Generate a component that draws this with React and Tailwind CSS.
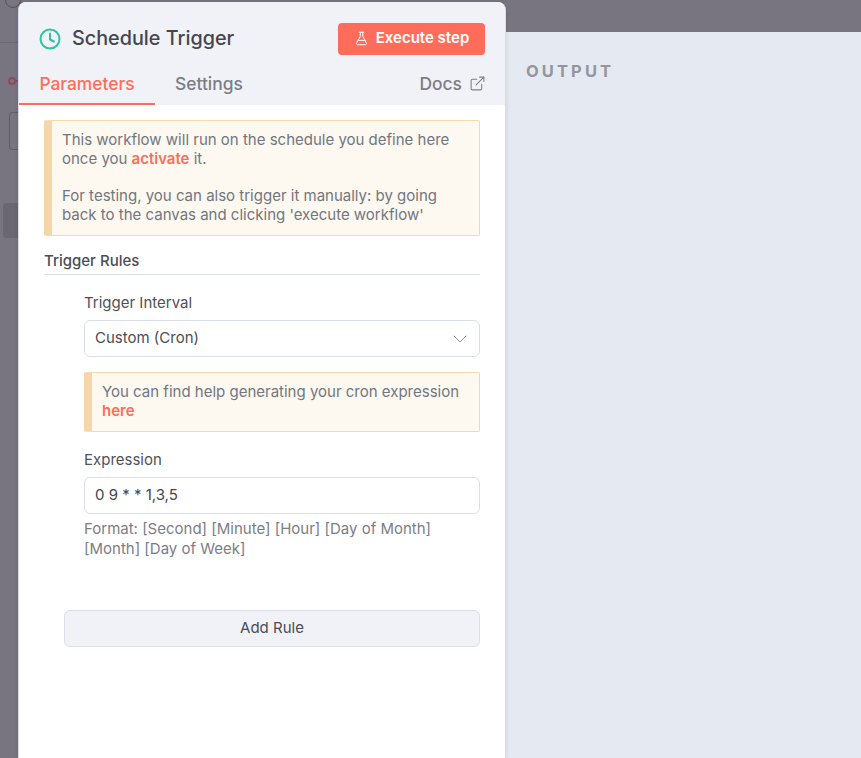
import { ExternalLink, FlaskConical, ChevronDown } from "lucide-react";

function Notice({ children }) {
    return (
        <div className="rounded-[2px] border border-[#f4d9ab] border-l-[8px] border-l-[#f3d7a9] bg-[#fdf8f0] text-[15px] leading-[19px] text-[#72767f]">
            {children}
        </div>
    );
}

function Clock() {
    return (
        <svg width="22" height="22" viewBox="0 0 22 22" fill="none" stroke="#2fc3a0" strokeWidth="2" strokeLinecap="round" strokeLinejoin="round">
            <circle cx="11" cy="11" r="9.5" />
            <path d="M11 5.5V11.5L15 13.5" />
        </svg>
    );
}

export default function App() {
    return (
        <div className="relative flex h-[758px] w-[861px] overflow-hidden bg-[#787581] font-['Inter',sans-serif]">
            {/* canvas behind the dialog, dimmed */}
            <div className="w-[18px] shrink-0 pt-[42px]">
                <div className="absolute -top-[8px] left-[5px] size-[16px] rounded-full border border-[#55535e]" />
                <div className="border-t border-[#6c6975]" />
                <div className="mt-[34px] ml-[8px] flex items-center">
                    <div className="size-[8px] rounded-full border-2 border-[#8d4a5c]" />
                    <div className="h-[2px] w-[2px] bg-[#8d4a5c]" />
                </div>
                <div className="mt-[27px] ml-[9px] h-[38px] rounded-l-[4px] border border-r-0 border-[#5f5d68]" />
                <div className="mt-[53px] ml-[3px] h-[35px] rounded-l-[4px] bg-[#6a6773]" />
            </div>

            {/* node settings */}
            <div className="z-10 mt-[2px] flex w-[488px] shrink-0 flex-col rounded-t-[8px] border-x border-[#d9dce8] bg-white shadow-[0_0_4px_rgba(0,0,0,0.12)]">
                <div className="rounded-t-[8px] bg-[#f0f2f8]">
                    <div className="flex h-[58px] items-center justify-between pt-[13px] pr-[20px] pl-[20px]">
                        <div className="mt-[2px] flex items-center gap-[11px]">
                            <Clock />
                            <span className="text-[19.8px] font-medium text-[#44464e]">Schedule Trigger</span>
                        </div>
                        <button className="mt-[2px] flex h-[32px] w-[147px] items-center justify-center gap-[7px] rounded-[4px] bg-[#ff6d5a] text-[15px] font-semibold text-white">
                            <FlaskConical size={15} strokeWidth={1.6} />
                            Execute step
                        </button>
                    </div>
                    <div className="flex h-[45px] items-stretch pr-[19px]">
                        <div className="flex w-[136px] items-center justify-center border-b-2 border-[#ff6d5a] pt-[6px] text-[17.4px] font-medium text-[#ff6d5a]">Parameters</div>
                        <div className="ml-[20px] flex items-center pt-[4px] text-[17.4px] font-medium text-[#7c7d86]">Settings</div>
                        <div className="ml-auto flex items-center gap-[7px] pt-[4px] text-[17.4px] font-medium text-[#7c7d86]">
                            Docs
                            <ExternalLink size={17} strokeWidth={1.5} className="mb-[3px]" />
                        </div>
                    </div>
                </div>

                <div className="flex flex-col pt-[15px] pr-[25px] pl-[25px]">
                    <Notice>
                        <div className="pt-[9px] pr-[10px] pb-[11px] pl-[10px]">
                            <p>This workflow will run on the schedule you define here<br />once you <b className="font-semibold text-[#ff6d5a]">activate</b> it.</p>
                            <p className="mt-[18px]">For testing, you can also trigger it manually: by going<br />back to the canvas and clicking 'execute workflow'</p>
                        </div>
                    </Notice>

                    <div className="mt-[15px] border-b border-[#d9dee9] pb-[4px] text-[15px] leading-[19px] font-medium text-[#4b4d55]">Trigger Rules</div>

                    <div className="pl-[40px]">
                        <div className="mt-[18px] text-[15px] leading-[19px] text-[#4f5159]">Trigger Interval</div>
                        <div className="mt-[8px] flex h-[37px] items-center justify-between rounded-[6px] border border-[#d9dee9] bg-white pr-[7px] pl-[10px] text-[15px] text-[#4b4d55]">
                            Custom (Cron)
                            <ChevronDown size={24} strokeWidth={0.8} className="text-[#777]" />
                        </div>
                        <div className="mt-[15px]">
                            <Notice>
                                <div className="pt-[9px] pr-[10px] pb-[11px] pl-[10px]">
                                    You can find help generating your cron expression<br />
                                    <b className="font-semibold text-[#ff6d5a]">here</b>
                                </div>
                            </Notice>
                        </div>
                        <div className="mt-[18px] text-[15px] leading-[19px] text-[#4f5159]">Expression</div>
                        <div className="mt-[8px] flex h-[37px] items-center rounded-[6px] border border-[#dcdfe9] bg-white pl-[10px] text-[15px] text-[#44464e]">0 9 * * 1,3,5</div>
                        <p className="mt-[5px] text-[15px] leading-[20px] text-[#7c7d86]">Format: [Second] [Minute] [Hour] [Day of Month]<br />[Month] [Day of Week]</p>
                    </div>

                    <div className="mt-[51px] pl-[20px]">
                        <button className="h-[37px] w-full rounded-[6px] border border-[#dcdfe9] bg-[#f0f2f8] text-[15px] text-[#4b4d55]">Add Rule</button>
                    </div>
                </div>
            </div>

            {/* output panel */}
            <div className="mt-[32px] grow bg-[#e5e9f2] pt-[29px] pl-[20px]">
                <div className="text-[16.5px] leading-[20px] font-bold tracking-[3.1px] text-[#95959e]">OUTPUT</div>
            </div>
        </div>
    );
}
